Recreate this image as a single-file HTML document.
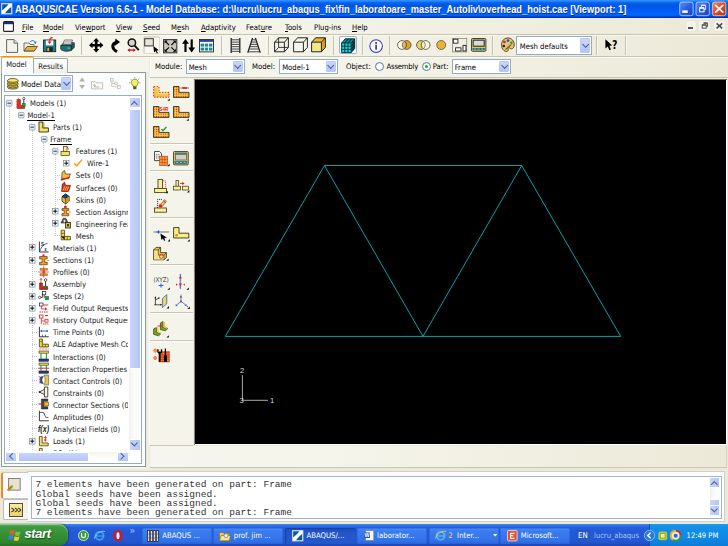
<!DOCTYPE html>
<html><head><meta charset="utf-8"><title>ABAQUS/CAE</title>
<style>
*{box-sizing:border-box;margin:0;padding:0}
html,body{width:728px;height:546px;overflow:hidden;background:#ece9d8}
body{position:relative;font-family:"DejaVu Sans Condensed","Liberation Sans","DejaVu Sans",sans-serif;font-size:7.65px;color:#000;line-height:1}
.a{position:absolute;white-space:pre}
svg{position:absolute;overflow:visible}
u{text-decoration:underline;text-underline-offset:1px;text-decoration-thickness:.7px}
#title{left:0;top:0;width:728px;height:17.8px;background:linear-gradient(#3d95ff 0,#2383ff 1.2px,#0867f2 2.6px,#0055e0 5px,#005bee 9px,#0066ff 14px,#0062fa 15.4px,#0042d2 16.6px,#0032ba 17.8px)}
#title .t{left:15.4px;top:4.6px;font-family:"Liberation Sans",sans-serif;font-weight:bold;font-size:10px;color:#fff;text-shadow:.6px .6px 0 #0a2a86;transform:scaleX(.931);transform-origin:0 0}
.tbtn{top:2px;width:14px;height:14px;border:1px solid #e8eefc;border-radius:2.5px;background:radial-gradient(circle at 30% 25%,#5c8cf5,#2a5de0 60%,#1f46c8)}
.tbtn.x{background:radial-gradient(circle at 30% 25%,#ee8a6a,#d8482a 60%,#b8300f)}
#menu{left:0;top:17.8px;width:728px;height:16.2px;background:linear-gradient(90deg,#f7f6ee 0,#f5f4ea 35%,#f0eee0 70%,#ece9d8 100%)}
#menu .m{top:5.8px}
.hl{height:2px;border-top:1px solid #c6c3b3;border-bottom:1px solid #f9f8f1}
.sep{width:2px;height:19px;border-left:1px solid #c5c2b2;border-right:1px solid #f7f6ee;top:36px}
.combo{background:#fff;border:1px solid #92abc6;height:15px}
.combo .tx{left:2.2px;top:3.5px}
.ar{width:10px;height:11px;background:linear-gradient(#cad6fc,#b4c4f7);border:1px solid #b9c8f5;border-radius:1px}
.ar:after{content:"";position:absolute;left:1.7px;top:calc(50% - 4px);width:4.4px;height:4.4px;border-right:1.5px solid #4d6185;border-bottom:1.5px solid #4d6185;transform:rotate(45deg)}
.radio{width:9px;height:9px;border-radius:50%;border:1px solid #5a7fa6;background:radial-gradient(circle at 60% 60%,#fff 40%,#dcdcd0)}
#vp{left:194.8px;top:80.2px;width:532.4px;height:365px;background:#000;border-right:1px solid #fff;border-bottom:1px solid #fff}
#task{left:0;top:524.2px;width:728px;height:22px;background:linear-gradient(#3c84f2 0,#3276ea 1.6px,#2660dc 3px,#2459d6 8px,#2358d4 17px,#1f4fc4 20px,#1a44b4 22px)}
.tab{border:1px solid #a3abae;border-bottom:none;border-radius:2px 2px 0 0;background:#fcfcfe}
#tree{left:4px;top:95px;width:138px;height:369px;background:#fff;border:1px solid #94acc6;overflow:hidden}
.row{left:0;height:12px;font-size:7.65px}
.ex{width:6.4px;height:6.4px;border:.8px solid #8da2b8;background:linear-gradient(135deg,#fff,#d4d9df);border-radius:1px}
.ex:before{content:"";position:absolute;left:1px;right:1px;top:2px;height:.9px;background:#555}
.ex.p{border-color:#444;background:#fff;border-radius:0}
.ex.p:before{background:#000}
.ex.p:after{content:"";position:absolute;top:1px;bottom:1px;left:2px;width:.9px;background:#000}
.ul{height:1.2px;background:#000}
.sb{background:linear-gradient(90deg,#c9d5fc,#bccbf8 60%,#b4c4f6);border:1px solid #fff;border-radius:1.5px}
.sbh{background:linear-gradient(#c9d5fc,#bccbf8 60%,#b4c4f6);border:1px solid #fff;border-radius:1.5px}
.chev{width:4.6px;height:4.6px;border-left:1.8px solid #4d6185;border-top:1.8px solid #4d6185}
#msg{left:30.6px;top:475.8px;width:691.6px;height:43.4px;color:#333;background:#fff;border:1px solid #9fb6cf;font-family:"Liberation Mono","DejaVu Sans Mono",monospace;font-size:9.5px;overflow:hidden}
#msg span{left:3.8px}
.tk{top:527.8px;height:16px;border-radius:2px;background:linear-gradient(#4a8ef8,#3a7cf0 20%,#3272e8 80%,#2a66dc);color:#fff;font-size:7.7px;box-shadow:inset 0 0 0 .5px #2a5fd0}
.tk.on{background:linear-gradient(#1c4cb8,#2256c8 30%,#2458cc);box-shadow:inset .6px .6px 1px #12378f}
.tk span{top:4.6px}
</style></head><body>
<div class="a" id="title"><svg style="left:1.4px;top:2.9px" width="11.4" height="11.4" viewBox="0 0 11.4 11.4"><rect x=".4" y=".4" width="10.6" height="10.6" fill="#fff" stroke="#c8d4e8" stroke-width=".8"/><path d="M1.2 1.2H7.4L5.6 3.4L3.4 5.6L1.2 7.4Z" fill="#0f5a8c"/><path d="M10.2 10.2H4L5.8 8L8 5.8L10.2 4Z" fill="#0f5a8c"/><path d="M1.4 10L10 1.4" stroke="#fff" stroke-width="1.3"/></svg><span class="a t">ABAQUS/CAE Version 6.6-1 - Model Database: d:\lucru\lucru_abaqus_fix\fin_laboratoare_master_Autoliv\overhead_hoist.cae [Viewport: 1]</span>
<svg style="left:678px;top:0px" width="50" height="18" viewBox="0 0 50 18"><defs><linearGradient id="gb" x1="0" y1="0" x2="1" y2="1"><stop offset="0" stop-color="#5a8cf6"/><stop offset=".5" stop-color="#2c5fe2"/><stop offset="1" stop-color="#1a42c0"/></linearGradient><linearGradient id="gr" x1="0" y1="0" x2="1" y2="1"><stop offset="0" stop-color="#ee8c6c"/><stop offset=".5" stop-color="#d94a2c"/><stop offset="1" stop-color="#b4300e"/></linearGradient></defs>
<rect x="1.7" y="2.1" width="13.4" height="13.6" rx="2.2" fill="url(#gb)" stroke="#b4ccf8" stroke-width=".9"/><rect x="4.3" y="10.4" width="5.4" height="2.5" fill="#fff"/>
<rect x="18" y="2.1" width="13.4" height="13.6" rx="2.2" fill="url(#gb)" stroke="#b4ccf8" stroke-width=".9"/><path d="M23.4 7V5.4H27.6V9.4H26.2" fill="none" stroke="#e8eefc" stroke-width="1"/><path d="M23.4 5.3H27.6" stroke="#e8eefc" stroke-width="1.4"/><rect x="21.6" y="8" width="4.4" height="3.8" fill="none" stroke="#fff" stroke-width="1"/><path d="M21.6 7.9H26" stroke="#fff" stroke-width="1.5"/>
<rect x="34.4" y="2.1" width="13.4" height="13.6" rx="2.2" fill="url(#gr)" stroke="#f0c0b0" stroke-width=".9"/><path d="M37.6 5.4L44.8 12.2M44.8 5.4L37.6 12.2" stroke="#fff" stroke-width="1.8" stroke-linecap="round"/></svg>
</div>
<div class="a" id="menu"><svg style="left:3px;top:3px" width="11" height="11" viewBox="0 0 11 11"><rect x=".6" y=".6" width="9.8" height="9.8" rx="1" fill="#fff" stroke="#222" stroke-width="1.1"/><rect x="1" y="1" width="9" height="2.2" fill="#1a2f7a"/></svg>
<span class="a m" style="left:22px"><u>F</u>ile</span>
<span class="a m" style="left:43px"><u>M</u>odel</span>
<span class="a m" style="left:75px">Vie<u>w</u>port</span>
<span class="a m" style="left:116px"><u>V</u>iew</span>
<span class="a m" style="left:143px"><u>S</u>eed</span>
<span class="a m" style="left:171px">M<u>e</u>sh</span>
<span class="a m" style="left:201px"><u>A</u>daptivity</span>
<span class="a m" style="left:246px">Feat<u>u</u>re</span>
<span class="a m" style="left:285px"><u>T</u>ools</span>
<span class="a m" style="left:314px">Plu<u>g</u>-ins</span>
<span class="a m" style="left:352px"><u>H</u>elp</span>
<div class="a" style="left:685.5px;top:3.1px;width:10.6px;height:9.8px;background:#f5f4ec;border-radius:1.5px;box-shadow:0 0 .8px #b8b5a6"></div><div class="a" style="left:699.2px;top:3.1px;width:11.2px;height:9.8px;background:#f5f4ec;border-radius:1.5px;box-shadow:0 0 .8px #b8b5a6"></div><div class="a" style="left:713.7px;top:3.1px;width:11.5px;height:9.8px;background:#f5f4ec;border-radius:1.5px;box-shadow:0 0 .8px #b8b5a6"></div><div class="a" style="left:688px;top:9.4px;width:4.6px;height:1.5px;background:#555"></div><svg style="left:700.6px;top:4.2px" width="8" height="7" viewBox="0 0 8 7"><path d="M2.6 1.2H6.6V4.6H5.2" fill="none" stroke="#555" stroke-width="1"/><path d="M2.6 1H6.6" stroke="#555" stroke-width="1.3"/><rect x="1.2" y="3" width="4" height="3.2" fill="none" stroke="#555" stroke-width="1"/><path d="M1.2 2.9H5.2" stroke="#555" stroke-width="1.3"/></svg><svg style="left:716px;top:5.5px" width="7" height="6" viewBox="0 0 7 6"><path d="M.6 .4L6.2 5.4M6.2 .4L.6 5.4" stroke="#4a4a4a" stroke-width="1.5"/></svg>
</div>
<div class="a" style="left:0;top:34px;width:728px;height:22px;background:linear-gradient(90deg,#f7f6ee 0,#f5f4ea 35%,#f0eee0 70%,#ece9d8 100%)"></div>
<div class="a" style="left:150px;top:57px;width:578px;height:20.5px;background:linear-gradient(90deg,#f7f6ee 0,#f5f4ea 35%,#f0eee0 70%,#ece9d8 100%)"></div>
<div class="a" style="left:150px;top:78px;width:43px;height:367px;background:#f5f4ea"></div>
<div class="a" style="left:150px;top:445.5px;width:576.5px;height:22.5px;background:linear-gradient(90deg,#f7f6ee 0,#f5f4ea 35%,#f0eee0 70%,#ece9d8 100%);border-right:1px solid #d8d5c5"></div>
<div class="a hl" style="left:0;top:33.5px;width:728px"></div>
<div class="a hl" style="left:0;top:55.5px;width:728px"></div>
<svg style="left:6px;top:38.5px" width="12.5" height="14" viewBox="0 0 12.5 14"><path d="M.6 .6H8L11.6 4.2V13.4H.6Z" fill="#f4f3ea" stroke="#555" stroke-width=".9"/><path d="M8 .6V4.2H11.6" fill="#dcdacb" stroke="#555" stroke-width=".8"/></svg><svg style="left:23px;top:38.5px" width="15" height="13" viewBox="0 0 15 13"><path d="M1 4H6L7 5.5H11V12H1Z" fill="#f6f3dc" stroke="#555" stroke-width=".8"/><path d="M1 12L4 7.5H14.5L11.3 12Z" fill="#e8b030" stroke="#444" stroke-width=".8"/><path d="M7 3.2C8.5 1 11.5 1 12.5 3.6" fill="none" stroke="#3566c8" stroke-width="1"/><path d="M13.6 2.4L12.6 5L10.8 3.6Z" fill="#3566c8"/></svg><svg style="left:42.7px;top:37.3px" width="13.2" height="15.2" viewBox="0 0 13.2 15.2"><rect x=".5" y="3" width="12.2" height="11.7" fill="#1b7f8c" stroke="#222" stroke-width=".9"/><rect x="2.8" y="3.4" width="7.6" height="5" fill="#f4f4f4"/><rect x="3.4" y="10.2" width="6.4" height="4.3" fill="#222"/><rect x="4.3" y="10.8" width="1.8" height="3.2" fill="#e8b030"/><path d="M9.6 .6C7.4 .6 6.6 2 6.6 4.4" fill="none" stroke="#d81e1e" stroke-width="1.1"/><path d="M4.6 4.4H8.6L6.6 7Z" fill="#d81e1e"/></svg><svg style="left:60px;top:39.3px" width="15.2" height="13" viewBox="0 0 15.2 13"><path d="M1 6.5L4 3.5H13.5L11.5 6.5Z" fill="#2a8a98" stroke="#222" stroke-width=".7"/><path d="M4.5 1H12.5L11 5.2H3Z" fill="#f6f6f6" stroke="#444" stroke-width=".7"/><path d="M4.8 2.6H11.4M4.3 3.9H10.9" stroke="#777" stroke-width=".5"/><path d="M.7 6.5H11.5V11.3C8 13 3 12.6 .7 10.2Z" fill="#1b6f80" stroke="#222" stroke-width=".7"/><path d="M11.5 6.5L14.3 3.8V8.4L11.5 11.3Z" fill="#155868" stroke="#222" stroke-width=".7"/><rect x="7.6" y="8.6" width="2.2" height="1" fill="#e8c030"/></svg><svg style="left:89px;top:38.3px" width="14.4" height="14.4" viewBox="0 0 14.4 14.4"><path d="M7.2 0L10.3 3.5H8.5V5.9H10.9V4.1L14.4 7.2L10.9 10.3V8.5H8.5V10.9H10.3L7.2 14.4L4.1 10.9H5.9V8.5H3.5V10.3L0 7.2L3.5 4.1V5.9H5.9V3.5H4.1Z" fill="#000"/></svg><svg style="left:109px;top:38px" width="12" height="15" viewBox="0 0 12 15"><path d="M8 13.6C2.4 10.6 2.6 6 7.4 4.2" fill="none" stroke="#000" stroke-width="3"/><path d="M6.4 .4L11 4L6 7.8Z" fill="#000"/></svg><svg style="left:126.6px;top:38.4px" width="13" height="14.4" viewBox="0 0 13 14.4"><circle cx="4.9" cy="4.7" r="3.7" fill="#d4d4cc" stroke="#111" stroke-width="1.5"/><path d="M7.6 7.6L11.8 12.2" stroke="#111" stroke-width="2"/><path d="M1.6 12.1H7.6" stroke="#e01010" stroke-width="1.4"/><path d="M.4 12.1L2.8 10.2V14ZM8.8 12.1L6.4 10.2V14Z" fill="#e01010"/></svg><div class="a" style="left:142.5px;top:36.2px;width:17.5px;height:17.5px;border:1px solid #dddac9;border-radius:2px;background:#f8f7f0;box-shadow:inset .6px .6px 0 #c8c5b4"></div><svg style="left:144px;top:37.8px" width="16" height="16" viewBox="0 0 16 16"><rect x=".7" y=".7" width="8.6" height="7.2" fill="#e9e5d6" stroke="#333" stroke-width="1"/><path d="M9.4 8L14.8 12.2L12.6 12.5L13.9 15L12.8 15.5L11.6 13L10 14.6Z" fill="#000"/></svg><svg style="left:163px;top:38.6px" width="14.4" height="14.4" viewBox="0 0 14.4 14.4"><rect x=".6" y=".6" width="13.2" height="13.2" fill="#c9c6ba" stroke="#3a3a3a" stroke-width="1.1"/><path d="M2.2 2.2L6 6M12.2 2.2L8.4 6M2.2 12.2L6 8.4M12.2 12.2L8.4 8.4" stroke="#000" stroke-width="1.1"/><path d="M1.6 1.6H4.6L1.6 4.6ZM12.8 1.6V4.6L9.8 1.6ZM1.6 12.8V9.8L4.6 12.8ZM12.8 12.8H9.8L12.8 9.8Z" fill="#000"/></svg><svg style="left:182px;top:38.8px" width="13.4" height="14" viewBox="0 0 13.4 14"><path d="M3.5 3V13" stroke="#000" stroke-width="2.2"/><path d="M3.5 0L0 4.8H7Z" fill="#000"/><path d="M9.7 .4V10.4" stroke="#000" stroke-width="2.2"/><path d="M9.7 13.4L6.2 8.6H13.2Z" fill="#000"/></svg><svg style="left:199.3px;top:39.2px" width="15" height="13.4" viewBox="0 0 15 13.4"><rect x=".5" y=".5" width="14" height="12.4" fill="#fff" stroke="#222" stroke-width=".9"/><rect x="1" y="1" width="13" height="1.9" fill="#2b3fb0"/><g fill="#1f8a96"><rect x="1.6" y="4.6" width="3.4" height="3"/><rect x="5.8" y="4.6" width="3.4" height="3"/><rect x="10" y="4.6" width="3.4" height="3"/><rect x="1.6" y="8.6" width="3.4" height="3"/><rect x="5.8" y="8.6" width="3.4" height="3"/><rect x="10" y="8.6" width="3.4" height="3"/></g></svg><svg style="left:230.4px;top:37.7px" width="11" height="15" viewBox="0 0 11 15"><path d="M1.2 0V15M9.8 0V15" stroke="#222" stroke-width="1.3"/><path d="M1 1.8H10M1 4.1H10M1 6.4H10M1 8.7H10M1 11H10M1 13.3H10" stroke="#333" stroke-width=".9"/></svg><svg style="left:247.4px;top:37.7px" width="14" height="15" viewBox="0 0 14 15"><path d="M5.6 0L.8 14.6M8.4 0L13.2 14.6" stroke="#222" stroke-width="1.3"/><path d="M5 1.8H9M4.4 4.1H9.6M3.6 6.4H10.4M2.8 8.7H11.2M2 11H12M.6 13.8H13.4" stroke="#333" stroke-width=".9"/></svg><svg style="left:274.2px;top:37.3px" width="15" height="15.6" viewBox="0 0 15 15.6"><path d="M.6 5.2L4.6 .8H14.4V10.4L10.4 14.8H.6Z" fill="#f3f2e8" stroke="#111" stroke-width=".9" stroke-linejoin="round"/><path d="M.6 5.2H10.4V14.8M10.4 5.2L14.4 .8" fill="none" stroke="#111" stroke-width=".9"/><path d="M4.6 .8V10.4H14.4M4.6 10.4L.6 14.8" fill="none" stroke="#111" stroke-width=".8"/></svg><svg style="left:293.2px;top:37.3px" width="15" height="15.6" viewBox="0 0 15 15.6"><path d="M.6 5.2L4.6 .8H14.4V10.4L10.4 14.8H.6Z" fill="#f6f5ee" stroke="#111" stroke-width=".9" stroke-linejoin="round"/><path d="M.6 5.2H10.4V14.8M10.4 5.2L14.4 .8" fill="none" stroke="#111" stroke-width=".9"/></svg><svg style="left:311.3px;top:37.3px" width="15" height="15.6" viewBox="0 0 15 15.6"><path d="M.6 5.2L4.6 .8H14.4L10.4 5.2Z" fill="#ecb438"/><path d="M10.4 5.2L14.4 .8V10.4L10.4 14.8Z" fill="#dca428"/><rect x=".6" y="5.2" width="9.8" height="9.6" fill="#f4e88c"/><path d="M.6 5.2L4.6 .8H14.4V10.4L10.4 14.8H.6Z" fill="none" stroke="#111" stroke-width=".9" stroke-linejoin="round"/><path d="M.6 5.2H10.4V14.8M10.4 5.2L14.4 .8" fill="none" stroke="#111" stroke-width=".9"/></svg><div class="a" style="left:338.6px;top:36.2px;width:18px;height:18px;border:1px solid #9cb0d8;border-radius:2px;background:#fff"></div><svg style="left:340.6px;top:37.6px" width="14.4" height="15.4" viewBox="0 0 14.4 15.4"><path d="M.6 5L4.2 .8H13.8L10.2 5Z" fill="#0a8a92"/><path d="M10.2 5L13.8 .8V10.4L10.2 14.6Z" fill="#076a72"/><rect x=".6" y="5" width="9.6" height="9.6" fill="#12d4dc"/><path d="M.6 5L4.2 .8H13.8V10.4L10.2 14.6H.6Z" fill="none" stroke="#011" stroke-width=".8"/><path d="M.6 5H10.2V14.6M10.2 5L13.8 .8M.6 8.2H10.2L13.8 4M.6 11.4H10.2L13.8 7.2M3.8 5V14.6M7 5V14.6M3.8 5L7.4 .8M7 5L10.6 .8M12 2.9V12.5" fill="none" stroke="#011" stroke-width=".75"/></svg><svg style="left:369px;top:38.6px" width="14.2" height="14.2" viewBox="0 0 14.2 14.2"><circle cx="7.1" cy="7.1" r="6.3" fill="#fbfbf6" stroke="#3a3acc" stroke-width="1.05"/><circle cx="7.1" cy="3.9" r="1" fill="#2a2ab8"/><path d="M7.1 5.8V10.8" stroke="#2a2ab8" stroke-width="1.6"/></svg><svg style="left:397px;top:40.2px" width="14.6" height="10" viewBox="0 0 14.6 10"><circle cx="9.6" cy="5" r="4.4" fill="#e8a020" stroke="#444" stroke-width=".8"/><circle cx="5" cy="5" r="4.4" fill="#fbf8e4" stroke="#444" stroke-width=".8"/><path d="M7.3 1.3A4.4 4.4 0 0 1 7.3 8.7A4.4 4.4 0 0 1 7.3 1.3Z" fill="#e8b850" stroke="#444" stroke-width=".6"/></svg><svg style="left:415.6px;top:40.2px" width="14.6" height="10" viewBox="0 0 14.6 10"><circle cx="5" cy="5" r="4.4" fill="#f0d060" stroke="#444" stroke-width=".8"/><circle cx="9.6" cy="5" r="4.4" fill="#fbf8e4" stroke="#444" stroke-width=".8"/><path d="M7.3 1.3A4.4 4.4 0 0 1 7.3 8.7A4.4 4.4 0 0 1 7.3 1.3Z" fill="#f6efc0" stroke="#444" stroke-width=".6"/></svg><svg style="left:436.4px;top:40.2px" width="10.4" height="10" viewBox="0 0 10.4 10"><circle cx="5.2" cy="5" r="4.5" fill="#eeb030" stroke="#555" stroke-width=".8"/></svg><svg style="left:452.4px;top:38px" width="15.2" height="14.4" viewBox="0 0 15.2 14.4"><rect x=".5" y=".5" width="14.2" height="13.4" fill="#f1efe3" stroke="#8a887c" stroke-width=".8"/><rect x="1.3" y="1.2" width="4.6" height="4" fill="#fdfdf8" stroke="#222" stroke-width=".9"/><rect x="3.6" y="9.8" width="5.4" height="3.2" fill="#fdfdf8" stroke="#222" stroke-width=".9"/><rect x="11" y="7.4" width="3" height="5.6" fill="#fdfdf8" stroke="#222" stroke-width=".9"/></svg><svg style="left:471.2px;top:38.3px" width="15.4" height="13.8" viewBox="0 0 15.4 13.8"><rect x=".5" y=".5" width="14.4" height="12.8" rx="1" fill="#d8c470" stroke="#333" stroke-width=".9"/><rect x="2" y="2" width="11.4" height="6.4" fill="#6a7a84" stroke="#222" stroke-width=".6"/><rect x="3" y="3" width="9.4" height="4.4" fill="#d8dcc8"/><rect x="1.6" y="10" width="12.2" height="2.2" fill="#1f6f80"/><path d="M3 11.1H5M6.6 11.1H8.6M10.2 11.1H12.2" stroke="#e8e070" stroke-width=".8"/></svg><svg style="left:499.8px;top:37.4px" width="15" height="15.6" viewBox="0 0 15 15.6"><path d="M7 1C11.5 .6 14.6 4 14.2 8.2C13.8 12 11 12.4 9.8 11.2C8.8 10.2 7.8 10.8 8.2 12.2C8.8 14.4 6.4 15.4 4 13.6C.2 10.8 .4 2 7 1Z" fill="#e2c270" stroke="#54430f" stroke-width=".9"/><circle cx="4.4" cy="5" r="1.3" fill="#d82020"/><circle cx="8" cy="3.6" r="1.3" fill="#2050d0"/><circle cx="11.4" cy="5.8" r="1.3" fill="#20a040"/><circle cx="3.8" cy="9" r="1.3" fill="#222"/><path d="M5.4 12.6L11.4 7.4" stroke="#7a5a20" stroke-width="1.2"/></svg><svg style="left:604.8px;top:38.8px" width="8" height="12.4" viewBox="0 0 8 12.4"><path d="M.4 .2L7.2 6.6L4.4 6.8L6 10.6L4.4 11.3L2.8 7.6L.4 9.6Z" fill="#000"/></svg><span class="a" style="left:612.2px;top:38px;font-weight:bold;font-size:13px;transform:scaleX(.8);transform-origin:0 0">?</span>
<div class="a sep" style="left:81.3px"></div>
<div class="a sep" style="left:220.8px"></div>
<div class="a sep" style="left:267.6px"></div>
<div class="a sep" style="left:333.3px"></div>
<div class="a sep" style="left:362.2px"></div>
<div class="a sep" style="left:389.4px"></div>
<div class="a sep" style="left:492.3px"></div>
<div class="a sep" style="left:596.2px"></div>
<div class="a sep" style="left:625.2px"></div>
<div class="a combo" style="left:515.8px;top:36.4px;width:76px;height:18.3px"><span class="a tx" style="top:5.4px;left:3px">Mesh defaults</span><div class="a ar" style="right:1px;top:1px;width:9.8px;height:14.3px"></div></div>
<div class="a" style="left:149.5px;top:57px;width:1px;height:21px;background:#fff"></div>
<div class="a" style="left:150px;top:77px;width:578px;height:1px;background:#c9c6b6"></div>
<span class="a" style="left:155px;top:62.5px">Module:</span><div class="a combo" style="left:185.5px;top:59px;width:59px;height:15px"><span class="a tx">Mesh</span><div class="a ar" style="right:1px;top:1px"></div></div>
<span class="a" style="left:252px;top:62.5px">Model:</span><div class="a combo" style="left:279px;top:59px;width:58.5px;height:15px"><span class="a tx">Model-1</span><div class="a ar" style="right:1px;top:1px"></div></div>
<span class="a" style="left:346px;top:62.5px">Object:</span>
<div class="a radio" style="left:374.7px;top:62px"></div><span class="a" style="left:386.5px;top:62.5px;letter-spacing:-.2px">Assembly</span>
<div class="a radio" style="left:421.7px;top:62px"><div class="a" style="left:2px;top:2px;width:3.4px;height:3.4px;border-radius:50%;background:#2aa12a"></div></div><span class="a" style="left:432.7px;top:62.5px">Part:</span><div class="a combo" style="left:451.5px;top:59px;width:59.5px;height:15px"><span class="a tx">Frame</span><div class="a ar" style="right:1px;top:1px"></div></div>
<div class="a" style="left:0;top:57px;width:149.4px;height:412px;background:#f6f5ec"></div><div class="a" style="left:145px;top:72px;width:4.4px;height:396px;background:linear-gradient(90deg,#e4e1d2,#f5f4ea)"></div><div class="a" style="left:.5px;top:72px;width:145px;height:394.8px;background:#fcfcfe;border:1px solid #919b9c;border-top-color:#919b9c"></div><div class="a tab" style="left:33px;top:58px;width:34.5px;height:14.5px;background:linear-gradient(#fff,#f0f0ea)"><span class="a" style="left:4.2px;top:3.6px;font-size:7.7px;color:#222">Results</span></div><div class="a tab" style="left:1px;top:56px;width:32.5px;height:17px;border-top:none"><div class="a" style="left:-1px;top:0;width:32.5px;height:2.2px;background:#e68b2c;border-radius:2px 2px 0 0;border-bottom:.8px solid #ffc73c"></div><span class="a" style="left:4.2px;top:5px;font-size:7.6px;color:#222">Model</span></div><div class="a combo" style="left:4.4px;top:75.3px;width:68.2px;height:17px"><span class="a" style="left:15.6px;top:4.6px;font-size:7.8px;width:42.2px;overflow:hidden">Model Database</span><div class="a ar" style="right:.8px;top:1px;height:13px;width:9.6px"></div></div><svg style="left:7.2px;top:78.4px" width="11.8" height="11.6" viewBox="0 0 11.8 11.6"><g stroke="#3a3008" stroke-width=".7"><path d="M.6 8V9.6C.6 11.6 11 11.6 11 9.6V8Z" fill="#e8c838"/><ellipse cx="5.8" cy="8" rx="5.2" ry="1.9" fill="#f8e878"/><path d="M.6 5.2V6.8C.6 8.8 11 8.8 11 6.8V5.2Z" fill="#e8c838"/><ellipse cx="5.8" cy="5.2" rx="5.2" ry="1.9" fill="#f8e878"/><path d="M.6 2.4V4C.6 6 11 6 11 4V2.4Z" fill="#e8c838"/><ellipse cx="5.8" cy="2.4" rx="5.2" ry="1.9" fill="#f8e878"/></g></svg><svg style="left:78.6px;top:77.4px" width="6.2" height="12.4" viewBox="0 0 6.2 12.4"><path d="M3.1 .4L6 4.4H.2Z M3.1 12L6 8H.2Z" fill="#b4b09c"/></svg><svg style="left:91px;top:79.5px" width="12.2" height="9.4" viewBox="0 0 12.2 9.4"><path d="M.5 1.6H4.2L5 2.8H11.6V8.9H.5Z" fill="none" stroke="#b9b6a4" stroke-width=".8"/><path d="M3.6 4.8V7H8.4M2.4 5.8L3.6 4.4L4.8 5.8" fill="none" stroke="#a9a694" stroke-width=".8"/></svg><svg style="left:110.3px;top:78.4px" width="10.8" height="11" viewBox="0 0 10.8 11"><rect x=".5" y=".5" width="2.6" height="2.6" fill="none" stroke="#b9b6a4" stroke-width=".7"/><path d="M1.8 3.2V8.6H4.6M1.8 5.4H4.6" fill="none" stroke="#b9b6a4" stroke-width=".7"/><rect x="4.8" y="4.2" width="2.4" height="2.4" fill="none" stroke="#b9b6a4" stroke-width=".7"/><rect x="7.4" y="7.6" width="2.8" height="2.8" fill="none" stroke="#b9b6a4" stroke-width=".7"/><path d="M4.6 8.8H7.4" stroke="#b9b6a4" stroke-width=".7"/></svg><svg style="left:129.4px;top:77.2px" width="11.6" height="12.8" viewBox="0 0 11.6 12.8"><path d="M5.8 0V1.4M1.4 1.8L2.4 2.8M10.2 1.8L9.2 2.8M0 5.8H1.4M11.6 5.8H10.2" stroke="#7a9a30" stroke-width=".7"/><path d="M5.8 2.2C8 2.2 9.2 3.8 9.2 5.4C9.2 7 7.8 7.8 7.6 9.4H4C3.8 7.8 2.4 7 2.4 5.4C2.4 3.8 3.6 2.2 5.8 2.2Z" fill="#f8f060" stroke="#5a6a18" stroke-width=".7"/><rect x="4.2" y="9.6" width="3.2" height="2.6" fill="#4a5a3a"/></svg><div class="a" id="tree"><div class="a" style="left:4.2px;top:10.0px;width:0;height:346.0px;border-left:.8px dotted #cccccc"></div><div class="a" style="left:27.0px;top:34.0px;width:0;height:322.0px;border-left:.8px dotted #cccccc"></div><div class="a" style="left:38.4px;top:46.0px;width:0;height:94.0px;border-left:.8px dotted #cccccc"></div><div class="a" style="left:49.9px;top:58.0px;width:0;height:82.0px;border-left:.8px dotted #cccccc"></div><svg style="left:1.4px;top:3.6px" width="6.4" height="6.4" viewBox="0 0 6.4 6.4"><rect x=".4" y=".4" width="5.6" height="5.6" rx=".8" fill="#e6ebf0" stroke="#809cba" stroke-width=".8"/><path d="M1.5 3.2H4.9" stroke="#444" stroke-width="1.1"/></svg><svg style="left:11.3px;top:0.6px" width="11.4" height="12" viewBox="0 0 11.4 12"><path d="M1.2 2.6H4.4V8.4H8.6V11.4H1.2Z" fill="#e03020" stroke="#701008" stroke-width=".6"/><path d="M.5 2.4V11.6" stroke="#e85040" stroke-width=".7" stroke-dasharray=".8 .8"/><path d="M2.6 2.6V.8" stroke="#e03020" stroke-width=".7"/><path d="M7.8 2.4V8.4" stroke="#222" stroke-width=".9"/><circle cx="7.8" cy="1.5" r="1.15" fill="#fff" stroke="#222" stroke-width=".7"/><rect x="6.4" y="6.6" width="2.8" height="2.8" fill="#18a838" stroke="#063" stroke-width=".5"/></svg><span class="a row" style="color:#1c1c1c;left:25.1px;top:4.0px">Models (1)</span><svg style="left:12.8px;top:15.7px" width="6.4" height="6.4" viewBox="0 0 6.4 6.4"><rect x=".4" y=".4" width="5.6" height="5.6" rx=".8" fill="#e6ebf0" stroke="#809cba" stroke-width=".8"/><path d="M1.5 3.2H4.9" stroke="#444" stroke-width="1.1"/></svg><span class="a row" style="color:#1c1c1c;left:22.4px;top:16.1px">Model-1</span><div class="a ul" style="left:22.4px;top:24.1px;width:27.5px"></div><svg style="left:24.2px;top:27.7px" width="6.4" height="6.4" viewBox="0 0 6.4 6.4"><rect x=".4" y=".4" width="5.6" height="5.6" rx=".8" fill="#e6ebf0" stroke="#809cba" stroke-width=".8"/><path d="M1.5 3.2H4.9" stroke="#444" stroke-width="1.1"/></svg><svg style="left:33.3px;top:24.7px" width="11.4" height="12" viewBox="0 0 11.4 12"><path d="M1 1H4.8V7H10.4V11H1Z" fill="#f0e070" stroke="#3a3008" stroke-width=".9"/><path d="M4.8 1L6 2V6.4H10.4" fill="none" stroke="#8a7418" stroke-width=".7"/></svg><span class="a row" style="color:#1c1c1c;left:47.9px;top:28.1px">Parts (1)</span><svg style="left:35.6px;top:39.8px" width="6.4" height="6.4" viewBox="0 0 6.4 6.4"><rect x=".4" y=".4" width="5.6" height="5.6" rx=".8" fill="#e6ebf0" stroke="#809cba" stroke-width=".8"/><path d="M1.5 3.2H4.9" stroke="#444" stroke-width="1.1"/></svg><span class="a row" style="color:#1c1c1c;left:45.2px;top:40.2px">Frame</span><div class="a ul" style="left:45.2px;top:48.2px;width:21.6px"></div><svg style="left:47.1px;top:51.9px" width="6.4" height="6.4" viewBox="0 0 6.4 6.4"><rect x=".4" y=".4" width="5.6" height="5.6" rx=".8" fill="#e6ebf0" stroke="#809cba" stroke-width=".8"/><path d="M1.5 3.2H4.9" stroke="#444" stroke-width="1.1"/></svg><svg style="left:55.4px;top:48.9px" width="11.4" height="12" viewBox="0 0 11.4 12"><rect x="3.4" y="1.4" width="3.6" height="5" fill="#f8f0a0" stroke="#4a3c08" stroke-width=".7"/><rect x="1" y="6.4" width="8.6" height="4.2" fill="#f0e070" stroke="#4a3c08" stroke-width=".7"/><path d="M7 1.6L8.8 4.6" stroke="#d82020" stroke-width=".8"/></svg><span class="a row" style="color:#1c1c1c;left:70.8px;top:52.3px">Features (1)</span><svg style="left:58.2px;top:64.0px" width="6.4" height="6.4" viewBox="0 0 6.4 6.4"><rect x=".35" y=".35" width="5.7" height="5.7" fill="#fff" stroke="#77889c" stroke-width=".7"/><path d="M1.2 3.2H5.2M3.2 1.2V5.2" stroke="#000" stroke-width=".95"/></svg><svg style="left:68.4px;top:61.0px" width="11.4" height="12" viewBox="0 0 11.4 12"><path d="M1.2 6.4L3.6 8.8L9 2.8" fill="none" stroke="#f0a818" stroke-width="1.5"/></svg><span class="a row" style="color:#1c1c1c;left:81.9px;top:64.3px">Wire-1</span><div class="a" style="left:50.3px;top:78.8px;width:5px;height:0;border-top:.8px dotted #c4c4c4"></div><svg style="left:55.4px;top:73.0px" width="11.4" height="12" viewBox="0 0 11.4 12"><path d="M2.2 3.2L4.6 1.4L5.4 5H10.4L8.6 9.6H1.6Z" fill="#f0c040" stroke="#4a3008" stroke-width=".7"/><path d="M.8 11L9.8 8.4" stroke="#e01818" stroke-width="1.4"/></svg><span class="a row" style="color:#1c1c1c;left:70.8px;top:76.4px">Sets (0)</span><div class="a" style="left:50.3px;top:90.9px;width:5px;height:0;border-top:.8px dotted #c4c4c4"></div><svg style="left:55.4px;top:85.1px" width="11.4" height="12" viewBox="0 0 11.4 12"><path d="M2.4 3L4.6 1.2L5.4 4.4H10.6L8.4 10.4H1.6Z" fill="#e83020" stroke="#501008" stroke-width=".7"/><path d="M3 9.6L4.8 5.4M5 9.6L6.8 5.4M7 9.6L8.8 5.4" stroke="#f8d040" stroke-width=".8"/></svg><span class="a row" style="color:#1c1c1c;left:70.8px;top:88.5px">Surfaces (0)</span><div class="a" style="left:50.3px;top:103.0px;width:5px;height:0;border-top:.8px dotted #c4c4c4"></div><svg style="left:55.4px;top:97.2px" width="11.4" height="12" viewBox="0 0 11.4 12"><path d="M5.6 1L9.2 3.6V8.2L5.6 11L2 8.2V3.6Z" fill="#f0c020" stroke="#111" stroke-width=".7"/><path d="M5.6 1L9.2 3.6L5.6 5.8L2 3.6Z" fill="#1a3aa8" stroke="#111" stroke-width=".5"/><path d="M5.6 5.8L9.2 3.6V8.2L5.6 11Z" fill="#d49a10"/><path d="M5.6 5.8V11" stroke="#222" stroke-width=".6"/></svg><span class="a row" style="color:#1c1c1c;left:70.8px;top:100.6px">Skins (0)</span><svg style="left:47.1px;top:112.2px" width="6.4" height="6.4" viewBox="0 0 6.4 6.4"><rect x=".35" y=".35" width="5.7" height="5.7" fill="#fff" stroke="#77889c" stroke-width=".7"/><path d="M1.2 3.2H5.2M3.2 1.2V5.2" stroke="#000" stroke-width=".95"/></svg><svg style="left:55.4px;top:109.2px" width="11.4" height="12" viewBox="0 0 11.4 12"><path d="M2 3.6H8.8V5.4H6.6V8.6H8.8V10.8H2V8.6H4.2V5.4H2Z" fill="#f0a828" stroke="#5a2808" stroke-width=".7"/><circle cx="5.4" cy="2" r="1.4" fill="#d82020"/><path d="M9 7H10.6" stroke="#d82020" stroke-width=".8"/></svg><span class="a row" style="color:#1c1c1c;left:70.8px;top:112.6px">Section Assignments</span><svg style="left:47.1px;top:124.3px" width="6.4" height="6.4" viewBox="0 0 6.4 6.4"><rect x=".35" y=".35" width="5.7" height="5.7" fill="#fff" stroke="#77889c" stroke-width=".7"/><path d="M1.2 3.2H5.2M3.2 1.2V5.2" stroke="#000" stroke-width=".95"/></svg><svg style="left:55.4px;top:121.3px" width="11.4" height="12" viewBox="0 0 11.4 12"><path d="M1 6L3.2 1.4H6L8 6Z" fill="#555" stroke="#111" stroke-width=".6"/><rect x="3.6" y="2.8" width="1.8" height="2.8" fill="#ddd"/><rect x="5.6" y="5.4" width="4.8" height="5.6" fill="#e8c030" stroke="#222" stroke-width=".8"/><rect x="7" y="7" width="2" height="2.4" fill="#333"/></svg><span class="a row" style="color:#1c1c1c;left:70.8px;top:124.7px">Engineering Features</span><div class="a" style="left:50.3px;top:139.2px;width:5px;height:0;border-top:.8px dotted #c4c4c4"></div><svg style="left:55.4px;top:133.4px" width="11.4" height="12" viewBox="0 0 11.4 12"><path d="M1.2 1.2H4.6V7.4H10.4V10.8H1.2Z" fill="#f0d848" stroke="#4a3c08" stroke-width=".8"/><path d="M1.2 4.4H4.6M1.2 7.4H4.6V10.8M7.4 7.4V10.8" stroke="#4a3c08" stroke-width=".6"/></svg><span class="a row" style="color:#1c1c1c;left:70.8px;top:136.8px">Mesh</span><svg style="left:24.2px;top:148.4px" width="6.4" height="6.4" viewBox="0 0 6.4 6.4"><rect x=".35" y=".35" width="5.7" height="5.7" fill="#fff" stroke="#77889c" stroke-width=".7"/><path d="M1.2 3.2H5.2M3.2 1.2V5.2" stroke="#000" stroke-width=".95"/></svg><svg style="left:33.3px;top:145.4px" width="11.4" height="12" viewBox="0 0 11.4 12"><path d="M1.4 .6V11H10.6" fill="none" stroke="#222" stroke-width=".9"/><path d="M1.8 10.4C3.4 5.4 5.8 3 9.6 2.4" fill="none" stroke="#2850c8" stroke-width=".9"/><text x="3" y="4.6" font-size="4.6" font-family="Liberation Sans,sans-serif" font-weight="bold" fill="#111">S</text><text x="6.6" y="10" font-size="4.8" font-family="Liberation Sans,sans-serif" font-weight="bold" fill="#111">ε</text></svg><span class="a row" style="color:#1c1c1c;left:47.9px;top:148.8px">Materials (1)</span><svg style="left:24.2px;top:160.5px" width="6.4" height="6.4" viewBox="0 0 6.4 6.4"><rect x=".35" y=".35" width="5.7" height="5.7" fill="#fff" stroke="#77889c" stroke-width=".7"/><path d="M1.2 3.2H5.2M3.2 1.2V5.2" stroke="#000" stroke-width=".95"/></svg><svg style="left:33.3px;top:157.5px" width="11.4" height="12" viewBox="0 0 11.4 12"><path d="M1.6 2.6H9.2V4.8H6.8V8.4H9.2V10.8H1.6V8.4H4V4.8H1.6Z" fill="#f0a020" stroke="#5a2808" stroke-width=".7"/><circle cx="5.4" cy="1.4" r="1.1" fill="#d82020"/><path d="M9.4 6.6H10.8" stroke="#d82020" stroke-width=".8"/></svg><span class="a row" style="color:#1c1c1c;left:47.9px;top:160.9px">Sections (1)</span><div class="a" style="left:27.4px;top:175.4px;width:5px;height:0;border-top:.8px dotted #c4c4c4"></div><svg style="left:33.3px;top:169.6px" width="11.4" height="12" viewBox="0 0 11.4 12"><path d="M2 2.4H9.4V4.2H6.6V7.8H9.4V9.6H2V7.8H4.8V4.2H2Z" fill="#f0a020" stroke="#7a3808" stroke-width=".5"/><path d="M5.7 .2V11.8M.2 6H11" stroke="#e02020" stroke-width=".7"/></svg><span class="a row" style="color:#1c1c1c;left:47.9px;top:173.0px">Profiles (0)</span><svg style="left:24.2px;top:184.7px" width="6.4" height="6.4" viewBox="0 0 6.4 6.4"><rect x=".35" y=".35" width="5.7" height="5.7" fill="#fff" stroke="#77889c" stroke-width=".7"/><path d="M1.2 3.2H5.2M3.2 1.2V5.2" stroke="#000" stroke-width=".95"/></svg><svg style="left:33.3px;top:181.7px" width="11.4" height="12" viewBox="0 0 11.4 12"><path d="M1.6 5H4.4V8.4H9.6V11.4H1.6Z" fill="#d82818" stroke="#501008" stroke-width=".6"/><path d="M3 5V.6M1.8 2L3 .4L4.2 2" fill="none" stroke="#d82020" stroke-width=".7"/><path d="M7.6 3V8" stroke="#222" stroke-width=".9"/><circle cx="7.6" cy="2" r="1.3" fill="#fff" stroke="#222" stroke-width=".7"/><path d="M6 10L7.4 6.8L8.8 10Z" fill="#18a030" stroke="#063" stroke-width=".4"/></svg><span class="a row" style="color:#1c1c1c;left:47.9px;top:185.1px">Assembly</span><svg style="left:24.2px;top:196.7px" width="6.4" height="6.4" viewBox="0 0 6.4 6.4"><rect x=".35" y=".35" width="5.7" height="5.7" fill="#fff" stroke="#77889c" stroke-width=".7"/><path d="M1.2 3.2H5.2M3.2 1.2V5.2" stroke="#000" stroke-width=".95"/></svg><svg style="left:33.3px;top:193.7px" width="11.4" height="12" viewBox="0 0 11.4 12"><circle cx="1.6" cy="7.4" r="1.2" fill="#fff" stroke="#222" stroke-width=".7"/><path d="M2.8 7.4H4.4V3.4H8" fill="none" stroke="#222" stroke-width=".8"/><rect x="4.6" y="1.6" width="3.2" height="3.2" fill="#fff" stroke="#222" stroke-width=".7"/><path d="M6.2 4.8V8" stroke="#222" stroke-width=".8"/><rect x="7.4" y="6.4" width="3.2" height="3.4" fill="#18a030" stroke="#063" stroke-width=".5"/></svg><span class="a row" style="color:#1c1c1c;left:47.9px;top:197.1px">Steps (2)</span><svg style="left:24.2px;top:208.8px" width="6.4" height="6.4" viewBox="0 0 6.4 6.4"><rect x=".35" y=".35" width="5.7" height="5.7" fill="#fff" stroke="#77889c" stroke-width=".7"/><path d="M1.2 3.2H5.2M3.2 1.2V5.2" stroke="#000" stroke-width=".95"/></svg><svg style="left:33.3px;top:205.8px" width="11.4" height="12" viewBox="0 0 11.4 12"><rect x="1.6" y="1" width="3.4" height="3" fill="#fff" stroke="#222" stroke-width=".7"/><path d="M5 3H10.2" stroke="#e02020" stroke-width=".9"/><path d="M3.4 4V7H7.6" fill="none" stroke="#e02020" stroke-width=".8"/><path d="M7 5.4L9.4 7L7 8.6Z" fill="#e02020"/><path d="M1.6 10H10.4" stroke="#e02020" stroke-width="1" stroke-dasharray="1.4 .8"/></svg><span class="a row" style="color:#1c1c1c;left:47.9px;top:209.2px">Field Output Requests</span><svg style="left:24.2px;top:220.9px" width="6.4" height="6.4" viewBox="0 0 6.4 6.4"><rect x=".35" y=".35" width="5.7" height="5.7" fill="#fff" stroke="#77889c" stroke-width=".7"/><path d="M1.2 3.2H5.2M3.2 1.2V5.2" stroke="#000" stroke-width=".95"/></svg><svg style="left:33.3px;top:217.9px" width="11.4" height="12" viewBox="0 0 11.4 12"><rect x="1.6" y="1" width="3.4" height="3" fill="#fff" stroke="#e02020" stroke-width=".8"/><path d="M3.4 4V10M3.4 7H7.6" fill="none" stroke="#e02020" stroke-width=".8"/><rect x="7" y="5.2" width="3" height="3" fill="#fff" stroke="#e02020" stroke-width=".8"/><path d="M5 10H10.4" stroke="#e02020" stroke-width="1" stroke-dasharray="1.4 .8"/><path d="M7 1.6H10" stroke="#222" stroke-width=".8"/></svg><span class="a row" style="color:#1c1c1c;left:47.9px;top:221.3px">History Output Requests</span><div class="a" style="left:27.4px;top:235.7px;width:5px;height:0;border-top:.8px dotted #c4c4c4"></div><svg style="left:33.3px;top:229.9px" width="11.4" height="12" viewBox="0 0 11.4 12"><path d="M1.4 .8V10.8H10.8" fill="none" stroke="#222" stroke-width=".9"/><path d="M2.4 5H10" stroke="#2858c8" stroke-width=".9"/><path d="M2.2 5L4 3.8V6.2ZM10.4 5L8.6 3.8V6.2Z" fill="#2858c8"/><path d="M4.4 8.6V10.6M7.4 8.6V10.6" stroke="#222" stroke-width=".7"/></svg><span class="a row" style="color:#1c1c1c;left:47.9px;top:233.3px">Time Points (0)</span><div class="a" style="left:27.4px;top:247.8px;width:5px;height:0;border-top:.8px dotted #c4c4c4"></div><svg style="left:33.3px;top:242.0px" width="11.4" height="12" viewBox="0 0 11.4 12"><path d="M1.4 1H4.4V6.2H10.4V9H1.4Z" fill="#f0d848" stroke="#4a3c08" stroke-width=".8"/><path d="M1.4 3.6H4.4M4.4 6.2V9M7.4 6.2V9" stroke="#4a3c08" stroke-width=".6"/><path d="M.8 11H10.8" stroke="#e03030" stroke-width=".8" stroke-dasharray=".9 .6"/></svg><span class="a row" style="color:#1c1c1c;left:47.9px;top:245.4px">ALE Adaptive Mesh Constraints (0)</span><div class="a" style="left:27.4px;top:259.9px;width:5px;height:0;border-top:.8px dotted #c4c4c4"></div><svg style="left:33.3px;top:254.1px" width="11.4" height="12" viewBox="0 0 11.4 12"><rect x="1" y="1" width="9.4" height="2.2" fill="#e8d040" stroke="#333" stroke-width=".6"/><rect x="1" y="9" width="9.4" height="2.2" fill="#2a3a9a" stroke="#112" stroke-width=".6"/><path d="M3 3.2V9M8.4 3.2V9" stroke="#18a040" stroke-width="1.1"/></svg><span class="a row" style="color:#1c1c1c;left:47.9px;top:257.5px">Interactions (0)</span><div class="a" style="left:27.4px;top:271.9px;width:5px;height:0;border-top:.8px dotted #c4c4c4"></div><svg style="left:33.3px;top:266.1px" width="11.4" height="12" viewBox="0 0 11.4 12"><rect x="1" y="1" width="9.4" height="2.2" fill="#e8d040" stroke="#333" stroke-width=".6"/><rect x="1" y="9" width="9.4" height="2.2" fill="#2a3a9a" stroke="#112" stroke-width=".6"/><path d="M3 3.2V9M8.4 3.2V9" stroke="#18a040" stroke-width="1.1"/><path d="M.2 6.2H11.2" stroke="#e02020" stroke-width="1"/></svg><span class="a row" style="color:#1c1c1c;left:47.9px;top:269.5px">Interaction Properties</span><div class="a" style="left:27.4px;top:284.0px;width:5px;height:0;border-top:.8px dotted #c4c4c4"></div><svg style="left:33.3px;top:278.2px" width="11.4" height="12" viewBox="0 0 11.4 12"><path d="M6 1H10.6V11H6C7.6 8 7.6 4 6 1Z" fill="#e8c848" stroke="#554" stroke-width=".6"/><path d="M5.4 2.4C3.4 4 3.4 8 5.4 9.6L2.4 9V3Z" fill="#3a4aa8" stroke="#112" stroke-width=".5"/><path d="M1.4 2V10" stroke="#e03030" stroke-width=".8" stroke-dasharray=".9 .7"/></svg><span class="a row" style="color:#1c1c1c;left:47.9px;top:281.6px">Contact Controls (0)</span><div class="a" style="left:27.4px;top:296.1px;width:5px;height:0;border-top:.8px dotted #c4c4c4"></div><svg style="left:33.3px;top:290.3px" width="11.4" height="12" viewBox="0 0 11.4 12"><path d="M6.4 1H9.8V11H6.4ZM6.4 3.4L1.4 6L6.4 8.6" fill="#f8f4e0" stroke="#222" stroke-width=".8"/><circle cx="1.6" cy="6" r=".9" fill="#222"/></svg><span class="a row" style="color:#1c1c1c;left:47.9px;top:293.7px">Constraints (0)</span><div class="a" style="left:27.4px;top:308.2px;width:5px;height:0;border-top:.8px dotted #c4c4c4"></div><svg style="left:33.3px;top:302.4px" width="11.4" height="12" viewBox="0 0 11.4 12"><path d="M9.8 1H3.4V11H9.8V8.8H5.6V3.2H9.8Z" fill="#444" stroke="#111" stroke-width=".5"/><rect x="5.8" y="4" width="4.6" height="4" fill="#e8c030" stroke="#222" stroke-width=".5"/><path d="M.6 6H7" stroke="#e02020" stroke-width="1.1"/></svg><span class="a row" style="color:#1c1c1c;left:47.9px;top:305.8px">Connector Sections (0)</span><div class="a" style="left:27.4px;top:320.2px;width:5px;height:0;border-top:.8px dotted #c4c4c4"></div><svg style="left:33.3px;top:314.4px" width="11.4" height="12" viewBox="0 0 11.4 12"><path d="M1.4 .8V10.8H10.8" fill="none" stroke="#222" stroke-width=".9"/><path d="M1.6 2.4H5.4L7.8 7.4H10.4" fill="none" stroke="#222" stroke-width=".7"/><path d="M6.4 3.4V5" stroke="#2858c8" stroke-width=".8"/></svg><span class="a row" style="color:#1c1c1c;left:47.9px;top:317.8px">Amplitudes (0)</span><div class="a" style="left:27.4px;top:332.3px;width:5px;height:0;border-top:.8px dotted #c4c4c4"></div><svg style="left:33.3px;top:326.5px" width="11.4" height="12" viewBox="0 0 11.4 12"><text x="0" y="9.2" font-size="8.4" font-family="Liberation Sans,sans-serif" font-style="italic" font-weight="bold" fill="#222" textLength="11" lengthAdjust="spacingAndGlyphs">f(x)</text></svg><span class="a row" style="color:#1c1c1c;left:47.9px;top:329.9px">Analytical Fields (0)</span><svg style="left:24.2px;top:341.6px" width="6.4" height="6.4" viewBox="0 0 6.4 6.4"><rect x=".35" y=".35" width="5.7" height="5.7" fill="#fff" stroke="#77889c" stroke-width=".7"/><path d="M1.2 3.2H5.2M3.2 1.2V5.2" stroke="#000" stroke-width=".95"/></svg><svg style="left:33.3px;top:338.6px" width="11.4" height="12" viewBox="0 0 11.4 12"><path d="M1.4 1.4H4.2V8H10.2V10.8H1.4Z" fill="#f0e070" stroke="#4a3c08" stroke-width=".8"/><path d="M7.4 1V6" stroke="#e02020" stroke-width=".9"/><path d="M6 4.6L7.4 7L8.8 4.6Z" fill="#e02020"/><path d="M5.8 2.6H9.2" stroke="#e02020" stroke-width=".7"/></svg><span class="a row" style="color:#1c1c1c;left:47.9px;top:342.0px">Loads (1)</span><div class="a" style="left:27.4px;top:356.4px;width:5px;height:0;border-top:.8px dotted #c4c4c4"></div><svg style="left:33.3px;top:350.6px" width="11.4" height="12" viewBox="0 0 11.4 12"><path d="M1.4 1.4H4.2V8H10.2V10.8H1.4Z" fill="#f0e070" stroke="#4a3c08" stroke-width=".8"/></svg><span class="a row" style="color:#1c1c1c;left:47.9px;top:354.0px">BCs (1)</span><div class="a" style="left:123px;top:0;width:13.6px;height:369px;background:#fff"></div><div class="a" style="left:124.4px;top:0;width:12px;height:356px;background:linear-gradient(90deg,#f3f1ec,#fbfbf9 40%,#fefefd)"></div><div class="a sb" style="left:123.8px;top:1px;width:12.2px;height:11px"><div class="a chev" style="left:2.7px;top:3.5px;transform:rotate(45deg)"></div></div><div class="a sb" style="left:123.8px;top:12.6px;width:12.2px;height:260.6px"></div><div class="a sb" style="left:123.8px;top:343.4px;width:12.2px;height:11.4px"><div class="a chev" style="left:2.7px;top:.7px;transform:rotate(225deg)"></div></div><div class="a" style="left:0;top:355px;width:136px;height:14px;background:#fff"></div><div class="a" style="left:0;top:355.8px;width:124.6px;height:10px;background:linear-gradient(#f3f1ec,#fbfbf9 40%,#fefefd)"></div><div class="a sbh" style="left:.4px;top:355.6px;width:11.4px;height:10.4px"><div class="a chev" style="left:4px;top:1.9px;transform:rotate(-45deg)"></div></div><div class="a sbh" style="left:13px;top:355.6px;width:71.4px;height:10.4px"></div><div class="a sbh" style="left:112px;top:355.6px;width:12px;height:10.4px"><div class="a chev" style="left:1.4px;top:1.9px;transform:rotate(135deg)"></div></div></div>
<svg style="left:0;top:0" width="0" height="0"><defs><pattern id="mg" width="2.3" height="2.3" patternUnits="userSpaceOnUse"><rect width="2.3" height="2.3" fill="#f4dc58"/><rect x=".55" y=".55" width="1.25" height="1.25" fill="#e02810"/></pattern><pattern id="mr" width="2.3" height="2.3" patternUnits="userSpaceOnUse"><rect width="2.3" height="2.3" fill="#e23a1a"/><rect x=".6" y=".6" width="1.1" height="1.1" fill="#f8d848"/></pattern></defs></svg><div class="a" style="left:149.4px;top:78px;width:1px;height:367px;background:#fbfaf5"></div><div class="a" style="left:150px;top:444.6px;width:43px;height:1px;background:#c9c6b6"></div><div class="a" style="left:193.7px;top:79.2px;width:1.2px;height:366px;background:#8a887c"></div><div class="a" style="left:193.7px;top:79.2px;width:533px;height:1px;background:#6e6c5e"></div><div class="a" style="left:150px;top:143px;width:43px;height:2px;border-top:1px solid #c9c6b6;border-bottom:1px solid #fff"></div><div class="a" style="left:150px;top:169.5px;width:43px;height:2px;border-top:1px solid #c9c6b6;border-bottom:1px solid #fff"></div><div class="a" style="left:150px;top:217px;width:43px;height:2px;border-top:1px solid #c9c6b6;border-bottom:1px solid #fff"></div><div class="a" style="left:150px;top:264.3px;width:43px;height:2px;border-top:1px solid #c9c6b6;border-bottom:1px solid #fff"></div><div class="a" style="left:150px;top:311.5px;width:43px;height:2px;border-top:1px solid #c9c6b6;border-bottom:1px solid #fff"></div><div class="a" style="left:150px;top:340px;width:43px;height:2px;border-top:1px solid #c9c6b6;border-bottom:1px solid #fff"></div><svg style="left:152.8px;top:86.2px" width="16.6" height="12" viewBox="0 0 16.6 12"><path d="M.7 .7H6V6.4H16V11.2H.7Z" fill="#ecc848" stroke="#e02020" stroke-width="1" stroke-dasharray="1.5 1.3"/><path d="M1.6 1.6H5V7.4H15" fill="none" stroke="#f8e890" stroke-width=".9"/></svg><svg style="left:0px;top:0px" width="0" height="0" viewBox="0 0 0 0"></svg><svg style="left:166.8px;top:97.6px" width="3" height="3" viewBox="0 0 3 3"><path d="M2.8 2.8v-2.4l-2.4 2.4Z" fill="#111"/></svg><svg style="left:172.8px;top:86px" width="16.6" height="12" viewBox="0 0 16.6 12"><path d="M.5 .5H6V6.4H16V11.4H.5Z" fill="url(#mg)" stroke="#3a3010" stroke-width=".9"/><path d="M7.4 2H16" stroke="#222" stroke-width=".6"/><path d="M9.4 2H14" stroke="#e02020" stroke-width="1.6"/></svg><svg style="left:152.8px;top:105.9px" width="16.6" height="12" viewBox="0 0 16.6 12"><path d="M.5 .5H6V6.4H16V11.4H.5Z" fill="url(#mg)" stroke="#3a3010" stroke-width=".9"/><text x="6.6" y="5" font-size="4.6" font-weight="bold" font-family="Liberation Sans,sans-serif" fill="#e02020" textLength="8.6" lengthAdjust="spacingAndGlyphs">S4R</text></svg><svg style="left:172.8px;top:105.9px" width="16.6" height="12" viewBox="0 0 16.6 12"><path d="M.5 .5H6V6.4H16V11.4H.5Z" fill="url(#mg)" stroke="#3a3010" stroke-width=".9"/></svg><svg style="left:186.4px;top:117.6px" width="3" height="3" viewBox="0 0 3 3"><path d="M2.8 2.8v-2.4l-2.4 2.4Z" fill="#111"/></svg><svg style="left:152.8px;top:125.8px" width="16.6" height="12" viewBox="0 0 16.6 12"><path d="M.5 .5H6V6.4H16V11.4H.5Z" fill="url(#mg)" stroke="#3a3010" stroke-width=".9"/><path d="M8.4 3L10 4.8L13.4 1" fill="none" stroke="#18a030" stroke-width="1.3"/></svg><svg style="left:153.6px;top:151px" width="16" height="15.4" viewBox="0 0 16 15.4"><path d="M.5 .5H5.4L7.6 2.6V9.6H.5Z" fill="#fbfbfb" stroke="#222" stroke-width=".8"/><path d="M1.8 3.4H5.8M1.8 5.2H5.8M1.8 7H5.8" stroke="#555" stroke-width=".8" stroke-dasharray="1.2 .6"/><rect x="5.6" y="5.2" width="8" height="9.4" fill="#f0a030" stroke="#a04010" stroke-width=".6"/><path d="M5.6 8.4H13.6M5.6 11.4H13.6M8.2 5.2V14.6M10.8 5.2V14.6" stroke="#e03020" stroke-width=".6"/><path d="M15.6 15.2v-2.4l-2.4 2.4Z" fill="#111"/></svg><svg style="left:172.8px;top:150.8px" width="15.8" height="14.4" viewBox="0 0 15.8 14.4"><rect x=".5" y=".5" width="14.8" height="13.4" rx="1" fill="#d8c470" stroke="#4a4020" stroke-width=".9"/><rect x="1.8" y="1.6" width="12.2" height="1.2" fill="#1f6f80"/><rect x="2.4" y="3.6" width="11" height="5.4" fill="#d4d0c0" stroke="#555" stroke-width=".7"/><rect x="1.6" y="10.2" width="12.6" height="2.6" fill="#1f6f80"/><path d="M3 11.5H5.2M6.8 11.5H9M10.6 11.5H12.8" stroke="#6ac0e0" stroke-width="1"/></svg><svg style="left:153.6px;top:178.8px" width="14" height="14.2" viewBox="0 0 14 14.2"><rect x="4" y=".6" width="4.6" height="9" fill="#f6f0a0" stroke="#3a3010" stroke-width=".8"/><rect x=".5" y="9.4" width="12" height="4.2" fill="#f6f0a0" stroke="#3a3010" stroke-width=".8"/><path d="M8.6 1.8H11.4V9.4" fill="none" stroke="#e02020" stroke-width=".8" stroke-dasharray="1.2 .8"/><path d="M13.8 14.2v-2.4l-2.4 2.4Z" fill="#111"/></svg><svg style="left:172.6px;top:180.2px" width="16.4" height="11.6" viewBox="0 0 16.4 11.6"><rect x="3" y=".5" width="2.4" height="6" fill="#f6f0a0" stroke="#3a3010" stroke-width=".7"/><rect x=".5" y="6.2" width="7" height="3.8" fill="#f6f0a0" stroke="#3a3010" stroke-width=".7"/><rect x="9.6" y="6.2" width="6" height="3.8" fill="#f6f0a0" stroke="#3a3010" stroke-width=".7"/><path d="M7 3.4H10" stroke="#e02020" stroke-width=".9"/><path d="M9.4 1.8L11.6 3.4L9.4 5Z" fill="#e02020"/><path d="M16.4 12.4v-2.4l-2.4 2.4Z" fill="#111"/></svg><svg style="left:153.6px;top:198.4px" width="14" height="14.6" viewBox="0 0 14 14.6"><rect x=".5" y="10" width="12" height="4.2" fill="#f6f0a0" stroke="#3a3010" stroke-width=".8"/><path d="M3.6 10V1.4H8" fill="none" stroke="#111" stroke-width=".8" stroke-dasharray="1.2 .8"/><path d="M5.4 7.6L10.6 1.6L12.6 3.2L7.6 9.4Z" fill="#e8b858" stroke="#7a4a10" stroke-width=".5"/><circle cx="6.4" cy="8" r="1.8" fill="#e02020"/><path d="M9.4 3L11.6 4.6" stroke="#5a3008" stroke-width=".8"/></svg><svg style="left:152.8px;top:227px" width="17" height="14" viewBox="0 0 17 14"><path d="M.4 5H16.2" stroke="#222" stroke-width=".6"/><path d="M5.4 3.2V6.8M3.6 5H7.2" stroke="#3060e0" stroke-width="1"/><path d="M7.4 6.4L14 10.8L11.4 11L12.2 13.4L11 13.8L10 11.6L8.4 13Z" fill="#000"/><path d="M17 14.4v-2.4l-2.4 2.4Z" fill="#111"/></svg><svg style="left:172.6px;top:226.8px" width="16.6" height="12" viewBox="0 0 16.6 12"><path d="M.6 .6H6V6.2H15.8V11H.6Z" fill="#f6ee88" stroke="#3a3010" stroke-width=".9"/><circle cx="3.6" cy="8.2" r="1.3" fill="#f08030"/><path d="M16.8 14.6v-2.4l-2.4 2.4Z" fill="#111"/></svg><svg style="left:152.8px;top:246.4px" width="15" height="14.4" viewBox="0 0 15 14.4"><path d="M.6 4L3 1.4H7.6V6.6H13.4V11.6L11 13.8H.6Z" fill="#e8c060" stroke="#3a3010" stroke-width=".8"/><path d="M.6 4H5.2V9.2H11V13.8M5.2 4L7.6 1.4M11 9.2L13.4 6.6" fill="none" stroke="#3a3010" stroke-width=".7"/><path d="M1 4.4H4.8V9.6H10.6V13.4H1Z" fill="#f4e08a"/><circle cx="8.4" cy="10.4" r="2" fill="none" stroke="#e02020" stroke-width=".8"/><path d="M15.6 14.8v-2.4l-2.4 2.4Z" fill="#111"/></svg><span class="a" style="left:153.4px;top:276.6px;font-size:6.4px;letter-spacing:-.1px;color:#444">(XYZ)</span><svg style="left:157.6px;top:283.2px" width="6" height="5" viewBox="0 0 6 5"><path d="M3 .4V4.6M.6 2.5H5.4" stroke="#3060e0" stroke-width="1.1"/></svg><svg style="left:166.6px;top:286.6px" width="3" height="3" viewBox="0 0 3 3"><path d="M2.8 2.8v-2.4l-2.4 2.4Z" fill="#111"/></svg><svg style="left:175.4px;top:273.6px" width="12" height="15" viewBox="0 0 12 15"><path d="M5.4 0V15" stroke="#6a8af0" stroke-width="1.4"/><path d="M5.4 3.6V.6M5.4 11V14" stroke="#3060e0" stroke-width=".6"/><path d="M3.8 4.6L5.4 2L7 4.6ZM3.8 9.6L5.4 12.2L7 9.6Z" fill="#e02020"/><path d="M1 9.4L2.6 10.6L1 11.8ZM9.8 9.4L8.2 10.6L9.8 11.8Z" fill="#e02020"/></svg><svg style="left:186.4px;top:286.6px" width="3" height="3" viewBox="0 0 3 3"><path d="M2.8 2.8v-2.4l-2.4 2.4Z" fill="#111"/></svg><svg style="left:152.8px;top:294.4px" width="16" height="14.4" viewBox="0 0 16 14.4"><path d="M2.4 3.2V10.8H8M2.4 6L6 4" fill="none" stroke="#111" stroke-width=".7"/><path d="M1.4 4.2L2.4 2.2L3.4 4.2ZM7.4 9.8L9.2 10.8L7.4 11.8ZM5 3.6L6.8 3.6L6 5.2Z" fill="#111"/><path d="M2.6 10.8H1.4M4.6 10.8" stroke="#111"/><path d="M9.4 4.4L13.8 .6V9.8L9.4 13.6Z" fill="#f0d848" stroke="#3060e0" stroke-width=".8"/><path d="M16 14.4v-2.4l-2.4 2.4Z" fill="#111"/></svg><svg style="left:174.6px;top:294.6px" width="14.6" height="13" viewBox="0 0 14.6 13"><path d="M6 6.4V1M6 6.4L1.4 10.2M6 6.4L10.8 10" fill="none" stroke="#3060e0" stroke-width=".8"/><path d="M4.6 2.6L6 .4L7.4 2.6ZM.6 9L.8 11.2L2.8 10.4ZM11.6 9L11.4 11.2L9.4 10.4Z" fill="#3060e0"/><circle cx="6" cy="6.4" r="1" fill="#e02020"/><circle cx="6" cy="0" r=".6" fill="#e02020"/><circle cx="12.4" cy="11.6" r=".7" fill="#e02020"/><path d="M14.8 14v-2.4l-2.4 2.4Z" fill="#111"/></svg><svg style="left:153.4px;top:320.6px" width="15.6" height="15.6" viewBox="0 0 15.6 15.6"><path d="M.6 8L3.4 6.4V11.4L8 12.6L5.6 14.8L.6 13.4Z" fill="#7aa030" stroke="#204808" stroke-width=".7"/><path d="M3.4 6.4L5 7V11L8 12.6" fill="none" stroke="#e8c030" stroke-width="1.2"/><path d="M7.4 2L10 .6V6.4L14.8 7.6L12.4 9.8L7.4 8.6Z" fill="#7aa030" stroke="#204808" stroke-width=".7"/><path d="M10 .8L11.4 1.6V6L14.4 7.4" fill="none" stroke="#e8c030" stroke-width="1.2"/><path d="M4.6 5H8.2" stroke="#e02020" stroke-width=".9"/><path d="M7.4 3.6L9.2 5L7.4 6.4Z" fill="#e02020"/><path d="M15.8 16.6v-2.4l-2.4 2.4Z" fill="#111"/></svg><svg style="left:152.6px;top:348px" width="17" height="14.4" viewBox="0 0 17 14.4"><rect x="6" y="3.6" width="10.4" height="10.4" fill="url(#mr)" stroke="#c03020" stroke-width=".5"/><path d="M2.2 .6L.4 2.6L2.2 4.6L4 2.6ZM2.2 8L.4 10L2.2 12L4 10Z" fill="#f0a030" stroke="#e02020" stroke-width=".5"/><path d="M4.2 1.2V3.6C4.2 5 5.2 5.4 5.8 5.6V13.8H7.6V5.6C8.2 5.4 9.2 5 9.2 3.6V1.2H7.8V4H5.6V1.2Z" fill="#000"/><path d="M11.8 .6H13V7.4H14V13.8H10.8V7.4H11.8Z" fill="#000"/></svg>
<div class="a" id="vp"></div><div class="a" style="left:0;top:0"><svg style="left:194px;top:80px" width="532" height="364" viewBox="194 80 532 364">
<path d="M225.3 336.4L324.5 165.5L423 336.4L521.7 165.5L620.7 336.4ZM324.5 165.5H521.7" fill="none" stroke="#00b4bc" stroke-width=".9" stroke-linejoin="miter"/>
<path d="M242.4 375.1V400.3H267.9" fill="none" stroke="#d4d4d4" stroke-width=".8"/>
<g fill="#d8d8d8" font-family="Liberation Sans, sans-serif" font-size="7.6" text-anchor="middle"><text x="242" y="372.8">2</text><text x="241.6" y="403">3</text><text x="272.2" y="403">1</text></g>
</svg></div>
<div class="a" style="left:150px;top:467.4px;width:577px;height:1px;background:#c9c6b6"></div><div class="a" style="left:27px;top:471.3px;width:698px;height:50.4px;background:#fcfcfe;border:1px solid #d0d0c8;border-left:none"></div><div class="a" style="left:3.4px;top:498.6px;width:24.2px;height:21.8px;background:linear-gradient(90deg,#fff,#f2f1ea);border:1px solid #b8bcc0;border-right:none;border-radius:2px 0 0 2px"></div><div class="a" style="left:1.2px;top:471.5px;width:26.8px;height:27.6px;background:#fcfcfe;border:1px solid #c8c8c0;border-right:none;border-left:2px solid #e68b2c;border-radius:3px 0 0 3px"></div><svg style="left:7.4px;top:478px" width="14" height="13.4" viewBox="0 0 14 13.4"><rect x="1.6" y=".5" width="11.6" height="11.6" fill="#e6e2d0" stroke="#77756a" stroke-width=".9"/><path d="M.6 12.6L5.6 7.6" stroke="#c89818" stroke-width="2.4"/><path d="M1.6 10L3.4 11.8M3 8.6L4.8 10.4" stroke="#5a4408" stroke-width=".6"/></svg><div class="a" style="left:8.5px;top:502.8px;width:14.4px;height:13.8px;background:linear-gradient(#f8ec9c,#ecd46c);border:1px solid #55503a"><span class="a" style="left:1.4px;top:1.9px;font-family:Liberation Sans,sans-serif;font-weight:bold;font-size:8.4px;color:#222;transform:scaleX(.7);transform-origin:0 0">&gt;&gt;&gt;</span></div><div class="a" id="msg"><span class="a" style="top:3.7px">7 elements have been generated on part: Frame</span><span class="a" style="top:13.1px">Global seeds have been assigned.</span><span class="a" style="top:22.4px">Global seeds have been assigned.</span><span class="a" style="top:31.7px">7 elements have been generated on part: Frame</span><div class="a" style="right:1.6px;top:1px;width:10px;height:39px;background:linear-gradient(90deg,#f1efea,#fbfbf9 40%,#fefefd)"></div><div class="a sb" style="right:1px;top:.6px;width:11.2px;height:10.6px"><div class="a chev" style="left:2.3px;top:3.5px;transform:rotate(45deg)"></div></div><div class="a sb" style="right:1px;top:22.6px;width:11.2px;height:6.6px"></div><div class="a sb" style="right:1px;top:28.2px;width:11.2px;height:11px"><div class="a chev" style="left:2.3px;top:.6px;transform:rotate(225deg)"></div></div></div>
<div class="a" id="task"></div><div class="a" style="left:649px;top:524px;width:79px;height:22px;background:linear-gradient(#1a9cf0 0%,#1290e8 12%,#0f8ae6 60%,#0c7cd8 100%);border-left:1px solid #0a4fb0"></div><div class="a" style="left:-6px;top:524.3px;width:74px;height:22px;border-radius:0 9px 9px 0;background:linear-gradient(#5aa95a 0%,#3f9a3f 14%,#368f36 50%,#2e862e 85%,#256f25 100%);box-shadow:1px 0 1.5px #143c8c, inset 0 1px 1px #8ed08e"></div><svg style="left:7.6px;top:528.8px" width="14.3" height="13.2" viewBox="-0.6 0 13 12"><path d="M1.2 1.6C2.6 .6 4 .8 5.4 1.6L4.6 5.2C3.2 4.4 1.8 4.2 .4 5.2Z" fill="#e85a28"/><path d="M6.4 2C7.8 2.8 9.2 3 10.8 2L10 5.6C8.4 6.6 7 6.4 5.6 5.6Z" fill="#7cc040"/><path d="M.2 6.2C1.6 5.2 3 5.4 4.4 6.2L3.6 9.8C2.2 9 .8 8.8 -.6 9.8Z" fill="#3a80e8"/><path d="M5.4 6.6C6.8 7.4 8.2 7.6 9.8 6.6L9 10.2C7.4 11.2 6 11 4.6 10.2Z" fill="#f0c830"/></svg><span class="a" style="left:24.4px;top:527.6px;font-family:Liberation Sans,sans-serif;font-size:12.9px;font-weight:bold;font-style:italic;color:#fff;letter-spacing:-.35px;text-shadow:.8px .8px 1px #1a4a1a">start</span><svg style="left:77.6px;top:530px" width="11" height="11" viewBox="0 0 11 11"><circle cx="5.5" cy="5.5" r="5" fill="#3f9f3f" stroke="#d8ecd0" stroke-width=".9"/><path d="M3.6 3V6.2C3.6 8 7.4 8 7.4 6.2V3" fill="none" stroke="#fff" stroke-width="1.1"/></svg><svg style="left:93.6px;top:530px" width="11.4" height="11" viewBox="0 0 11.4 11"><circle cx="5.6" cy="5.8" r="4" fill="none" stroke="#3aa0f0" stroke-width="1.8"/><path d="M2 6H9.4" stroke="#3aa0f0" stroke-width="1.4"/><path d="M.4 8.6C2 3 8 .2 11 1.6" fill="none" stroke="#8ad0ff" stroke-width=".9"/></svg><svg style="left:112.6px;top:529.8px" width="10" height="11.4" viewBox="0 0 10 11.4"><ellipse cx="5" cy="5.7" rx="3.6" ry="4.6" fill="none" stroke="#d81818" stroke-width="2.3"/><ellipse cx="5" cy="5.7" rx="1.5" ry="3.4" fill="#f0f0f8"/></svg><span class="a" style="left:129.6px;top:525.4px;font-size:10.5px;color:#9cc4fa">»</span><div class="a tk" style="left:141.5px;width:70px"><svg style="left:5.4px;top:2px" width="12" height="12" viewBox="0 0 12 12"><rect x=".5" y=".5" width="11" height="11" fill="#dfe4ec" stroke="#223" stroke-width=".8"/><path d="M3 1V11M6 1V11M9 1V11" stroke="#112" stroke-width="1.3"/><path d="M1 4H11M1 8H11" stroke="#556" stroke-width=".6"/></svg><span class="a" style="left:20.8px">ABAQUS ...</span></div><div class="a tk" style="left:213px;width:69.5px"><svg style="left:6px;top:2.8px" width="12" height="10.6" viewBox="0 0 12 10.6"><path d="M.5 1.6H4.2L5.2 2.8H10.6V9.8H.5Z" fill="#f0d070" stroke="#8a6a18" stroke-width=".7"/><path d="M.5 9.8L2.2 4.4H11.6L10.2 9.8Z" fill="#f8e498" stroke="#8a6a18" stroke-width=".7"/><circle cx="7" cy="4.6" r="2" fill="#f4f0e0" stroke="#666" stroke-width=".6"/></svg><span class="a" style="left:20.8px">prof. jim ...</span></div><div class="a tk on" style="left:284.5px;width:71.3px"><svg style="left:7.6px;top:2px" width="11.4" height="11.4" viewBox="0 0 11.4 11.4"><rect x=".4" y=".4" width="10.6" height="10.6" fill="#fff" stroke="#c8d4e8" stroke-width=".8"/><path d="M1.2 1.2H7.4L5.6 3.4L3.4 5.6L1.2 7.4Z" fill="#0f5a8c"/><path d="M10.2 10.2H4L5.8 8L8 5.8L10.2 4Z" fill="#0f5a8c"/><path d="M1.4 10L10 1.4" stroke="#fff" stroke-width="1.3"/></svg><span class="a" style="left:22px">ABAQUS/...</span></div><div class="a tk" style="left:357.3px;width:69.4px"><svg style="left:6.4px;top:2.4px" width="10.4" height="11" viewBox="0 0 10.4 11"><rect x="1.6" y=".5" width="8.2" height="10" fill="#f4f6fb" stroke="#6a7aa0" stroke-width=".7"/><rect x="0" y="2.4" width="6" height="5.6" fill="#2a58b8"/><text x=".5" y="7.2" font-size="5.4" font-weight="bold" fill="#fff" font-family="Liberation Sans,sans-serif">W</text></svg><span class="a" style="left:19.8px">laborator...</span></div><div class="a tk" style="left:428.5px;width:70.5px"><svg style="left:6.6px;top:2.6px" width="11.4" height="11" viewBox="0 0 11.4 11"><circle cx="5.6" cy="5.8" r="4" fill="none" stroke="#5ab4f8" stroke-width="1.8"/><path d="M2 6H9.4" stroke="#5ab4f8" stroke-width="1.4"/><path d="M.4 8.6C2 3 8 .2 11 1.6" fill="none" stroke="#e8c850" stroke-width=".9"/></svg><span class="a" style="left:19.8px"><span style="color:#f8d060">2</span>  Inter...</span></div><svg style="left:493.4px;top:534.4px" width="4.4" height="3" viewBox="0 0 4.4 3"><path d="M0 0H4.4L2.2 2.6Z" fill="#fff"/></svg><div class="a tk" style="left:500.3px;width:70px"><svg style="left:7.2px;top:2.2px" width="10.6" height="11.4" viewBox="0 0 10.6 11.4"><rect x=".5" y=".5" width="9.6" height="10.4" rx="1" fill="#e85028" stroke="#fde" stroke-width=".8"/><path d="M7.6 3.4H3.6V8.4H7.6M3.6 5.8H6.6" fill="none" stroke="#fff" stroke-width="1.1"/></svg><span class="a" style="left:20.4px">Microsoft...</span></div><div class="a" style="left:575.6px;top:529px;width:14px;height:13px;background:#2358c8"></div><span class="a" style="left:578px;top:532.4px;font-size:7.8px;color:#fff">EN</span><span class="a" style="left:594px;top:532px;font-size:7.5px;color:#a4c6f8">lucru_abaqus</span><svg style="left:643.8px;top:530.2px" width="11" height="11" viewBox="0 0 11 11"><circle cx="5.5" cy="5.5" r="5.2" fill="#2a78e8" stroke="#9cc8f8" stroke-width=".8"/><path d="M6.6 2.8L3.8 5.5L6.6 8.2" fill="none" stroke="#fff" stroke-width="1.5"/></svg><svg style="left:658px;top:531px" width="9.6" height="9.6" viewBox="0 0 9.6 9.6"><rect x=".4" y=".4" width="8.8" height="8.8" rx="2" fill="#b8c838"/><rect x="2.6" y="2.6" width="4.4" height="4.4" fill="#f0f0a0" stroke="#8a9a20" stroke-width=".6"/></svg><svg style="left:670px;top:530.2px" width="11.4" height="11.4" viewBox="0 0 11.4 11.4"><circle cx="5.7" cy="5.7" r="5.2" fill="#e8e8e8"/><path d="M5.7 .8A4.9 4.9 0 0 1 10.6 5.7" fill="none" stroke="#e02020" stroke-width="2"/><path d="M10.6 5.7A4.9 4.9 0 0 1 3 9.8" fill="none" stroke="#28a038" stroke-width="2"/><path d="M3 9.8A4.9 4.9 0 0 1 5.7 .8" fill="none" stroke="#e8b020" stroke-width="2"/><circle cx="5.7" cy="5.7" r="2" fill="#2868d8"/></svg><span class="a" style="left:686.6px;top:532.4px;font-size:7.55px;color:#fff">12:49 PM</span>
</body></html>
